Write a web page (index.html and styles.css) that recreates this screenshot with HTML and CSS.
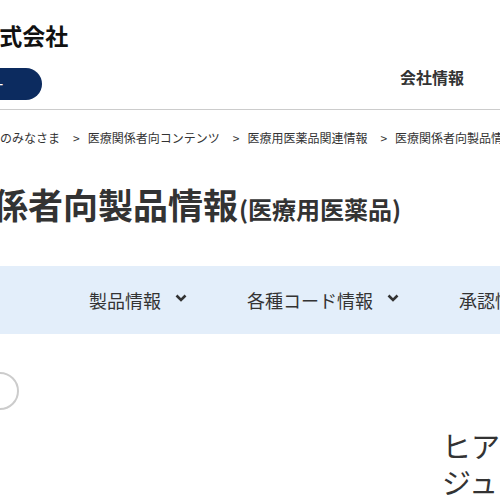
FILE: index.html
```html
<!DOCTYPE html>
<html lang="ja">
<head>
  <meta charset="UTF-8">
  <title>医療関係者向製品情報（医療用医薬品）</title>
  <link rel="stylesheet" href="styles.css">
</head>
<body>

  <header class="site-header">
    <div class="brand">
      <div class="logo">サンプル株式会社</div>
      <a class="menu-btn" href="#">会員メニュー</a>
    </div>
    <nav class="global-nav">
      <a href="#">会社情報</a>
    </nav>
  </header>

  <ol class="breadcrumb">
    <li class="crumb-first">医療関係者のみなさま</li>
    <li>医療関係者向コンテンツ</li>
    <li>医療用医薬品関連情報</li>
    <li>医療関係者向製品情報（医療用医薬品）</li>
  </ol>

  <h1 class="page-title">医療関係者向製品情報<small>(医療用医薬品)</small></h1>

  <div class="product-nav">
    <div class="product-nav-item">製品情報
      <svg width="12" height="8" viewBox="0 0 12 8"><polyline points="1.5,1.5 6,6 10.5,1.5" fill="none" stroke="#333" stroke-width="2.6"/></svg>
    </div>
    <div class="product-nav-item">各種コード情報
      <svg width="12" height="8" viewBox="0 0 12 8"><polyline points="1.5,1.5 6,6 10.5,1.5" fill="none" stroke="#333" stroke-width="2.6"/></svg>
    </div>
    <div class="product-nav-item">承認情報
      <svg width="12" height="8" viewBox="0 0 12 8"><polyline points="1.5,1.5 6,6 10.5,1.5" fill="none" stroke="#333" stroke-width="2.6"/></svg>
    </div>
  </div>

  <section class="feature">
    <div class="slider-btn"></div>
    <div class="product-name">
      <p>ヒアルロン酸</p>
      <p>ジュニア</p>
    </div>
  </section>

</body>
</html>
```

FILE: styles.css
```css
* {
  margin: 0;
  padding: 0;
  box-sizing: border-box;
}

html {
  overflow: hidden;
}

body {
  font-family: "Noto Sans CJK JP", "Noto Sans", sans-serif;
  color: #333;
  background: #fff;
  width: 500px;
  overflow: hidden;
}

a {
  text-decoration: none;
  color: inherit;
}

.site-header {
  display: flex;
  justify-content: space-between;
  height: 110px;
  border-bottom: 1px solid #ccc;
}

.brand {
  display: flex;
  flex-direction: column;
  align-items: flex-start;
  padding-top: 24px;
}

.logo {
  font-size: 23px;
  line-height: 23px;
  font-weight: bold;
  color: #111;
  white-space: nowrap;
  margin-left: -115px;
}

.menu-btn {
  display: block;
  margin-top: 21px;
  margin-left: -138px;
  width: 180px;
  height: 32px;
  line-height: 32px;
  border-radius: 16px;
  background: #0c2b5f;
  color: #fff;
  font-size: 14px;
  text-align: right;
  padding-right: 38px;
}

.global-nav {
  padding-top: 65px;
  padding-right: 36px;
}

.global-nav a {
  font-size: 16px;
  font-weight: bold;
  line-height: 18px;
}

.breadcrumb {
  list-style: none;
  display: flex;
  white-space: nowrap;
  font-size: 12px;
  line-height: 18px;
  padding-top: 19px;
}

.breadcrumb li + li::before {
  content: ">";
  margin: 0 8px 0 13px;
}

.crumb-first {
  margin-left: -60px;
}

.page-title {
  font-size: 35px;
  line-height: 40px;
  height: 40px;
  font-weight: bold;
  white-space: nowrap;
  margin: 37px 0 0 -112px;
}

.page-title small {
  font-size: 24px;
  margin-left: 1px;
}

.product-nav {
  display: flex;
  align-items: center;
  gap: 60px;
  height: 68px;
  margin-top: 42px;
  padding-left: 89px;
  background: #e3eefa;
  white-space: nowrap;
}

.product-nav-item {
  display: flex;
  align-items: center;
  gap: 14px;
  font-size: 18px;
}

.product-nav-item svg {
  margin-top: -4px;
}

.feature {
  display: flex;
  justify-content: space-between;
  padding-top: 38px;
}

.slider-btn {
  width: 38px;
  height: 38px;
  border: 2px solid #ccc;
  border-radius: 50%;
  margin-left: -19px;
}

.product-name {
  margin-top: 55px;
  width: 58px;
  font-size: 29px;
  line-height: 36px;
  white-space: nowrap;
}
```
